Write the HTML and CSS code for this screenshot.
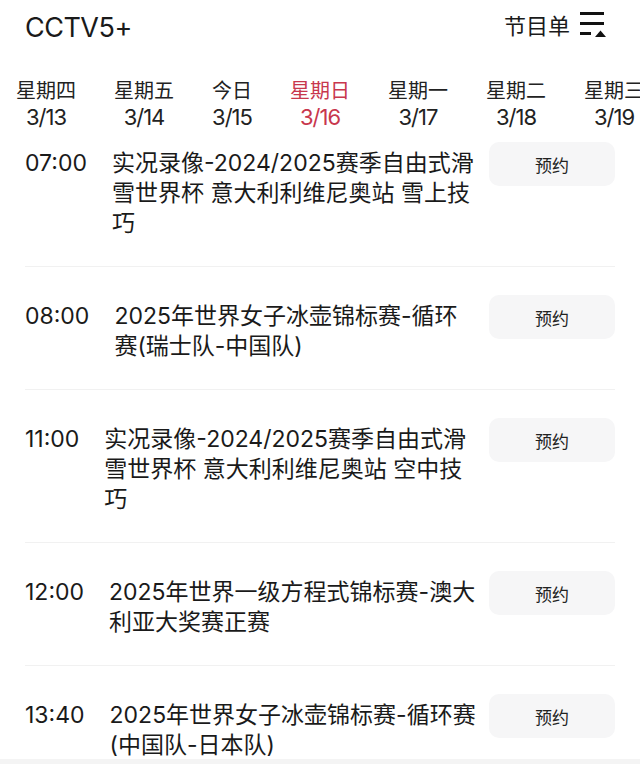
FILE: index.html
```html
<!DOCTYPE html>
<html lang="zh-CN">
<head>
  <meta charset="UTF-8">
  <meta name="viewport" content="width=device-width, initial-scale=1.0">
  <title>CCTV5+ 节目单</title>
  <link rel="stylesheet" href="styles.css">
</head>
<body>
  <header class="topbar">
    <h1 class="channel">CCTV5+</h1>
    <div class="guide">
      <span>节目单</span>
      <svg class="guide-icon" width="28" height="26" viewBox="0 0 28 26">
        <rect x="1" y="1" width="24" height="3" fill="#111" />
        <rect x="1" y="11" width="24" height="3" fill="#111" />
        <rect x="1" y="21" width="11" height="3" fill="#111" />
        <polygon points="16,26 21.5,19.5 27,26" fill="#111" />
      </svg>
    </div>
  </header>

  <nav class="days">
    <div class="day"><span class="weekday">星期四</span><span class="date">3/13</span></div>
    <div class="day"><span class="weekday">星期五</span><span class="date">3/14</span></div>
    <div class="day"><span class="weekday">今日</span><span class="date">3/15</span></div>
    <div class="day active"><span class="weekday">星期日</span><span class="date">3/16</span></div>
    <div class="day"><span class="weekday">星期一</span><span class="date">3/17</span></div>
    <div class="day"><span class="weekday">星期二</span><span class="date">3/18</span></div>
    <div class="day"><span class="weekday">星期三</span><span class="date">3/19</span></div>
  </nav>

  <ul class="schedule">
    <li class="show">
      <span class="time">07:00</span>
      <p class="title">实况录像-2024/2025赛季自由式滑雪世界杯 意大利利维尼奥站 雪上技巧</p>
      <button class="remind">预约</button>
    </li>
    <li class="show">
      <span class="time">08:00</span>
      <p class="title">2025年世界女子冰壶锦标赛-循环赛(瑞士队-中国队)</p>
      <button class="remind">预约</button>
    </li>
    <li class="show">
      <span class="time">11:00</span>
      <p class="title">实况录像-2024/2025赛季自由式滑雪世界杯 意大利利维尼奥站 空中技巧</p>
      <button class="remind">预约</button>
    </li>
    <li class="show">
      <span class="time">12:00</span>
      <p class="title">2025年世界一级方程式锦标赛-澳大利亚大奖赛正赛</p>
      <button class="remind">预约</button>
    </li>
    <li class="show">
      <span class="time">13:40</span>
      <p class="title">2025年世界女子冰壶锦标赛-循环赛(中国队-日本队)</p>
      <button class="remind">预约</button>
    </li>
  </ul>

  <div class="bottom-edge"></div>
</body>
</html>
```

FILE: styles.css
```css
body {
  margin: 0;
  height: 764px;
  overflow: hidden;
  background: #fff;
  color: #1a1a1a;
  font-family: Inter, "Noto Sans CJK SC", sans-serif;
}

.topbar {
  display: flex;
  justify-content: space-between;
  align-items: center;
  height: 54px;
  padding: 0 33px 0 25px;
}

.channel {
  margin: 0;
  font-size: 27px;
  font-weight: 400;
  letter-spacing: -0.5px;
}

.guide {
  display: flex;
  align-items: center;
  gap: 9px;
  margin-bottom: 6px;
  font-size: 22px;
}

.guide-icon {
  display: block;
}

.days {
  display: flex;
  gap: 38px;
  padding: 24px 0 2px 16px;
  overflow: hidden;
  white-space: nowrap;
}

.day {
  display: flex;
  flex-direction: column;
  align-items: center;
  flex-shrink: 0;
  line-height: 26px;
  color: #222;
}

.weekday {
  font-size: 20px;
}

.date {
  font-size: 22px;
  letter-spacing: -1px;
}

.day.active {
  color: #c8374d;
}

.schedule {
  list-style: none;
  margin: 0;
  padding: 0;
}

.show {
  display: flex;
  align-items: flex-start;
  gap: 25px;
  margin: 0 25px;
  padding: 28px 0;
  border-bottom: 1px solid #f1f1f1;
}

.show:first-child {
  padding-top: 10px;
}

.time {
  padding-top: 6px;
  font-size: 23px;
  line-height: 30px;
}

.title {
  flex: 1;
  margin: 0;
  padding-top: 6px;
  font-size: 23px;
  line-height: 30px;
}

.remind {
  flex-shrink: 0;
  width: 126px;
  height: 44px;
  margin-left: -12px;
  border: none;
  border-radius: 10px;
  background: #f6f6f7;
  color: #222;
  font-family: inherit;
  font-size: 17px;
}

.bottom-edge {
  position: fixed;
  left: 0;
  right: 0;
  bottom: 0;
  height: 5px;
  background: #f4f4f4;
}
```
